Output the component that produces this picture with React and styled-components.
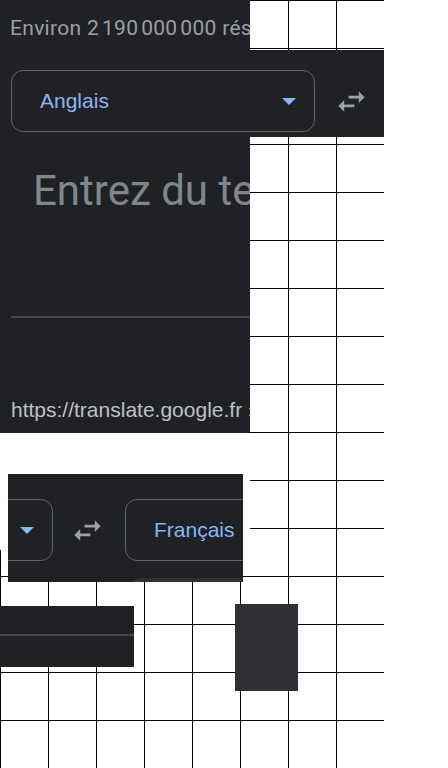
import React from "react"
import styled, { createGlobalStyle } from "styled-components"

const GlobalStyle = createGlobalStyle`
  html, body {
    margin: 0;
    padding: 0;
    background: #fff;
  }
  body {
    font-family: Roboto, "Liberation Sans", Arial, sans-serif;
  }
`

// white board ruled into 48px cells, the screenshot scraps lie on it
const Board = styled.div`
  position: relative;
  width: 384px;
  height: 768px;
  background-color: #fff;
  background-image:
    linear-gradient(to right, #000 1px, transparent 1px),
    linear-gradient(to bottom, #000 1px, transparent 1px);
  background-size: 48px 48px;
  overflow: hidden;
`

const Piece = styled.div`
  position: absolute;
  left: ${ p => p.$x }px;
  top: ${ p => p.$y }px;
  width: ${ p => p.$w }px;
  height: ${ p => p.$h }px;
  background: ${ p => p.$bg || "#202124" };
  overflow: hidden;
  ${ p => p.$clip && `clip-path: ${ p.$clip };` }
`

const Stats = styled.div`
  padding: 16px 0 0 10px;
  font: 21px/24px Roboto, sans-serif;
  letter-spacing: 0.3px;
  color: #9aa0a6;
  white-space: nowrap;
`

const LangBar = styled.div`
  display: flex;
  align-items: center;
  margin-top: ${ p => p.$top }px;
  padding-left: ${ p => p.$pad || 0 }px;
`

const LangSelect = styled.div`
  box-sizing: border-box;
  flex: none;
  display: flex;
  align-items: center;
  width: ${ p => p.$w }px;
  height: 62px;
  margin-left: ${ p => p.$offset || 0 }px;
  padding: 0 18px 0 28px;
  border: 1px solid #5f6368;
  border-radius: 12px;
  font: 21px "Liberation Sans", Arial, sans-serif;
  color: #8ab4f8;
  white-space: nowrap;
`

const LangName = styled.span`
  flex: 1;
`

const Caret = styled.span`
  width: 0;
  height: 0;
  border-left: 7px solid transparent;
  border-right: 7px solid transparent;
  border-top: 7px solid #8ab4f8;
`

const Swap = styled.span`
  flex: none;
  display: flex;
  margin: 0 ${ p => p.$after || 0 }px 0 ${ p => p.$before }px;
  color: #9aa0a6;
`

const Placeholder = styled.div`
  margin-top: 34px;
  padding-left: 33px;
  font: 42px/50px Roboto, sans-serif;
  color: #80868b;
  white-space: nowrap;
`

const Divider = styled.div`
  height: 2px;
  margin: ${ p => p.$top }px ${ p => p.$side || 0 }px 0;
  background: #444649;
`

const SourceUrl = styled.div`
  margin-top: 80px;
  padding-left: 11px;
  font: 21px/24px "Liberation Sans", Arial, sans-serif;
  color: #bdc1c6;
  white-space: nowrap;
`

const Sheet = styled.div`
  height: 30px;
  margin: 17px 0 0 122px;
  border-radius: 12px 0 0 0;
  background: #303134;
`

const SwapIcon = () => (
  <svg width="35" height="35" viewBox="0 0 24 24" fill="currentColor">
    <path d="M6.99 11L3 15l3.99 4v-3H14v-2H6.99v-3zM21 9l-3.99-4v3H10v2h7.01v3L21 9z" />
  </svg>
)

const headClip = "polygon(0 0, 250px 0, 250px 50px, 384px 50px, 384px 137px, 250px 137px, 250px 433px, 0 433px)"

const App = () => (
  <>
    <GlobalStyle />
    <Board>
      <Piece $x={0} $y={433} $w={250} $h={117} $bg="#fff" />
      <Piece $x={8} $y={550} $w={242} $h={26} $bg="#fff" />

      <Piece $x={0} $y={0} $w={384} $h={433} $clip={headClip}>
        <Stats>Environ 2{"\u202f"}190{"\u202f"}000{"\u202f"}000 résultats (0,41 secondes)</Stats>
        <LangBar $top={30} $pad={11}>
          <LangSelect $w={304}>
            <LangName>Anglais</LangName>
            <Caret />
          </LangSelect>
          <Swap $before={19}><SwapIcon /></Swap>
        </LangBar>
        <Placeholder>Entrez du texte</Placeholder>
        <Divider $top={100} $side={11} />
        <SourceUrl>https://translate.google.fr › ...</SourceUrl>
      </Piece>

      <Piece $x={8} $y={474} $w={235} $h={108}>
        <LangBar $top={25}>
          <LangSelect $w={200} $offset={-155}>
            <LangName>Anglais</LangName>
            <Caret />
          </LangSelect>
          <Swap $before={17} $after={20}><SwapIcon /></Swap>
          <LangSelect $w={250}>
            <LangName>Français</LangName>
          </LangSelect>
        </LangBar>
        <Sheet />
      </Piece>

      <Piece $x={0} $y={606} $w={134} $h={61}>
        <Divider $top={28} />
      </Piece>

      <Piece $x={235} $y={604} $w={63} $h={87} $bg="#303134" />
    </Board>
  </>
)

export default App
